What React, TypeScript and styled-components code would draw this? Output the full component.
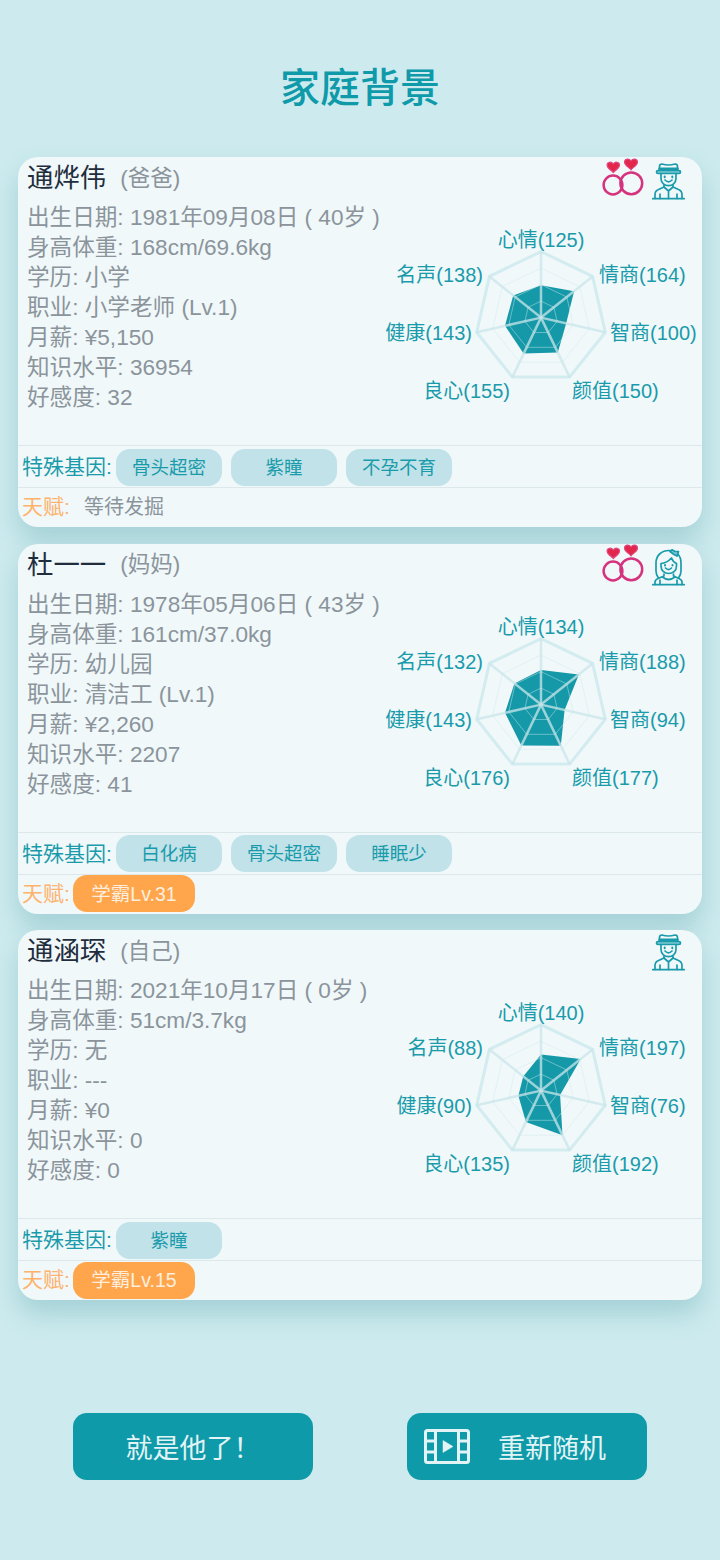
import styled, { createGlobalStyle } from 'styled-components'

const teal = '#0f9aaa'
const font = '"Liberation Sans", "Noto Sans CJK SC", sans-serif'

const GlobalStyle = createGlobalStyle`
  html, body {
    margin: 0;
    background: #cdebee;
    font-family: ${font};
  }
`

const Page = styled.div`
  width: 720px;
  height: 1560px;
  overflow: hidden;
  background: #cdebee;
  display: flex;
  flex-direction: column;
`

const Heading = styled.h1`
  margin: 0;
  height: 157px;
  padding-top: 13px;
  box-sizing: border-box;
  display: flex;
  align-items: center;
  justify-content: center;
  color: ${teal};
  font-size: 40px;
  font-weight: 500;
`

const CardList = styled.div`
  display: flex;
  flex-direction: column;
  gap: 16.5px;
  padding: 0 18px;
`

const Card = styled.section`
  height: 370px;
  background: #f0f8fa;
  border-radius: 20px;
  box-shadow: 0 14px 26px rgba(70, 150, 160, 0.3);
  display: flex;
  flex-direction: column;
  overflow: hidden;
`

const CardHeader = styled.div`
  height: 43px;
  padding: 0 17px 0 9px;
  display: flex;
  align-items: center;
`

const Name = styled.span`
  color: #1f2d3d;
  font-size: 26.4px;
  margin-bottom: 6px;
`

const Relation = styled.span`
  margin-left: 14px;
  color: #8b949b;
  font-size: 22.5px;
  margin-bottom: 6px;
`

const Icons = styled.div`
  margin-left: auto;
  display: flex;
  align-items: flex-end;
  gap: 9px;
  margin-top: 1px;
`

const CardBody = styled.div`
  height: 245px;
  display: flex;
  justify-content: space-between;
`

const InfoList = styled.div`
  padding: 3px 0 0 9px;
  white-space: nowrap;
`

const InfoLine = styled.div`
  height: 30px;
  line-height: 30px;
  color: #8b949b;
  font-size: 22.6px;
`

const ChartSvg = styled.svg`
  flex: none;
  display: block;
`

const ChartLabel = styled.text`
  fill: #1a9bab;
  font-family: ${font};
  font-size: 20px;
`

const Row = styled.div<{ $height: number }>`
  height: ${p => p.$height}px;
  box-sizing: border-box;
  border-top: 1px solid #dde8ea;
  padding-left: 4px;
  display: flex;
  align-items: center;
`

const GeneRow = styled(Row)`
  padding-top: 1px;
`

const RowLabel = styled.span<{ $color: string }>`
  width: 94px;
  flex: none;
  margin-bottom: 4px;
  color: ${p => p.$color};
  font-size: 21px;
  white-space: nowrap;
`

const TalentLabel = styled(RowLabel)`
  width: 51px;
  margin-bottom: 5px;
`

const Chips = styled.div`
  display: flex;
  gap: 9px;
`

const GeneChip = styled.span`
  width: 106px;
  height: 37px;
  padding-bottom: 3px;
  box-sizing: border-box;
  border-radius: 14px;
  background: #c0e2e8;
  color: #1a9bab;
  font-size: 18.5px;
  display: flex;
  align-items: center;
  justify-content: center;
`

const TalentChip = styled.span`
  width: 122px;
  height: 37px;
  margin-bottom: 1px;
  padding-bottom: 3px;
  box-sizing: border-box;
  border-radius: 14px;
  background: #ffa64d;
  color: #fdeede;
  font-size: 19.5px;
  display: flex;
  align-items: center;
  justify-content: center;
`

const PendingTalent = styled.span`
  margin: 0 0 5px 11px;
  color: #8b949b;
  font-size: 20px;
`

const Actions = styled.div`
  margin-top: 113px;
  padding-left: 73px;
  display: flex;
  gap: 94px;
`

const ActionButton = styled.button<{ $withIcon?: boolean }>`
  width: 240px;
  height: 67px;
  padding: ${p => (p.$withIcon ? '0 41px 0 17px' : '0')};
  border: 0;
  border-radius: 14px;
  background: ${teal};
  color: #e2f4f5;
  font-family: ${font};
  font-size: 27px;
  display: flex;
  align-items: center;
  justify-content: ${p => (p.$withIcon ? 'space-between' : 'center')};
`

const axes = ['心情', '情商', '智商', '颜值', '良心', '健康', '名声']
const labelPlaces: { x: number; y: number; anchor: 'start' | 'middle' | 'end' }[] = [
  { x: 159, y: 47, anchor: 'middle' },
  { x: 217, y: 82, anchor: 'start' },
  { x: 228, y: 140, anchor: 'start' },
  { x: 190, y: 198, anchor: 'start' },
  { x: 128, y: 198, anchor: 'end' },
  { x: 90, y: 140, anchor: 'end' },
  { x: 101, y: 82, anchor: 'end' },
]

const polar = (r: number, i: number) => {
  const a = (-90 + (i * 360) / 7) * (Math.PI / 180)
  return `${(159 + r * Math.cos(a)).toFixed(1)},${(117.6 + r * Math.sin(a)).toFixed(1)}`
}
const ringPoints = (r: number) => axes.map((_, i) => polar(r, i)).join(' ')

function Radar ({ values }: { values: number[] }) {
  return (
    <ChartSvg width="320" height="245" viewBox="0 0 320 245">
      <polygon points={values.map((v, i) => polar(v * 0.258, i)).join(' ')} fill="#1599a9" />
      {[16.5, 33, 49.5].map(r => (
        <polygon key={r} points={ringPoints(r)} fill="none" stroke="#cfe9ec" strokeOpacity="0.45" strokeWidth="1" />
      ))}
      <polygon points={ringPoints(66)} fill="none" stroke="#d3ecef" strokeWidth="3" />
      {axes.map((_, i) => {
        const [x, y] = polar(66, i).split(',')
        return <line key={i} x1="159" y1="117.6" x2={x} y2={y} stroke="#c9e6ea" strokeOpacity="0.75" strokeWidth="2.5" />
      })}
      {axes.map((axis, i) => (
        <ChartLabel key={axis} x={labelPlaces[i].x} y={labelPlaces[i].y} textAnchor={labelPlaces[i].anchor}>
          {axis}({values[i]})
        </ChartLabel>
      ))}
    </ChartSvg>
  )
}

const Heart = ({ x, y, s }: { x: number; y: number; s: number }) => (
  <path
    transform={`translate(${x} ${y}) scale(${s})`}
    d="M0 5 C-1.5 3 -5 2 -5 -1 C-5 -3.5 -1.5 -4.2 0 -1.8 C1.5 -4.2 5 -3.5 5 -1 C5 2 1.5 3 0 5 Z"
    fill="#e2274b"
    stroke="#e04a86"
    strokeWidth="0.9"
  />
)

const RingsIcon = () => (
  <svg width="42" height="41" viewBox="0 0 42 41" overflow="visible">
    <circle cx="12" cy="26" r="9.4" fill="none" stroke="#d6337f" strokeWidth="2.5" />
    <circle cx="30.3" cy="24.3" r="10.9" fill="none" stroke="#d6337f" strokeWidth="2.5" />
    <Heart x={12.3} y={7.3} s={1.25} />
    <Heart x={30} y={4.3} s={1.3} />
  </svg>
)

const ManIcon = () => (
  <svg width="33" height="37" viewBox="0 0 33 37" fill="none" stroke="#1a9bab" strokeWidth="1.7" strokeLinecap="round" strokeLinejoin="round">
    <path d="M7.5 7.5 V3.5 Q7.5 1 10 1 Q16.5 3 23 1 Q25.5 1 25.5 3.5 V7.5" />
    <path d="M7.5 5.8 H25.5" strokeWidth="2.6" />
    <rect x="4.5" y="7.5" width="24" height="3" rx="1.5" fill="#7cc8d2" />
    <path d="M9 10.5 V15.5 C9 25 24 25 24 15.5 V10.5" />
    <path d="M13 17 Q16.5 20.5 20 17" />
    <path d="M12.7 13.6 V14.2 M20.3 13.6 V14.2" strokeWidth="2" />
    <path d="M12 22 V24 L6.5 26.5 Q3 28 3 31.5 V35.5" />
    <path d="M21 22 V24 L26.5 26.5 Q30 28 30 31.5 V35.5" />
    <path d="M12 24 L16.5 28 L21 24 M16.5 28 V35.5 M8 31 V35.5 M25 31 V35.5" />
    <path d="M0.7 35.7 H32.3" />
  </svg>
)

const WomanIcon = () => (
  <svg width="33" height="37" viewBox="0 0 33 37" fill="none" stroke="#1a9bab" strokeWidth="1.7" strokeLinecap="round" strokeLinejoin="round">
    <path d="M6.5 29 Q4 26 4 22 V14 C4 6 10 1.5 17 1.5 C24 1.5 29 6 29 14 V22 Q29 26 26.5 29" />
    <path d="M9 14.5 Q15 14 19.5 9 Q21 13 24.5 14.5 V17 C24.5 27 9 27 9 17 Z" />
    <path d="M13.5 19 Q16.5 22 19.5 19" />
    <path d="M13 16 V16.6 M20.5 16 V16.6" strokeWidth="2" />
    <path d="M18 2.5 L22 5.5 L25 7 L26.5 2.5 L23 2.5 L20 0.8 Z" fill="#7cc8d2" />
    <path d="M12 25 V27 L6 29.5 Q3 31 3 33 V35.5 M21.5 25 V27 L27 29.5 Q30 31 30 33 V35.5" />
    <path d="M10.5 28 Q16.5 33 23 28 M8 31 V35.5 M25 31 V35.5" />
    <path d="M0.7 35.7 H32.3" />
  </svg>
)

const FilmIcon = () => (
  <svg width="46" height="35" viewBox="0 0 46 35" fill="none" stroke="#e2f4f5" strokeWidth="3" strokeLinejoin="round">
    <rect x="1.5" y="1.5" width="43" height="32" rx="2" />
    <path d="M11.5 1.5 V33.5 M34.5 1.5 V33.5 M1.5 12 H11.5 M1.5 23 H11.5 M34.5 12 H44.5 M34.5 23 H44.5" />
    <path d="M19 11.5 L29 17.5 L19 23.5 Z" fill="#e2f4f5" strokeWidth="0.5" />
  </svg>
)

type Person = {
  name: string
  relation: string
  married: boolean
  woman?: boolean
  lines: string[]
  values: number[]
  genes: string[]
  talent?: string
}

const people: Person[] = [
  {
    name: '通烨伟',
    relation: '(爸爸)',
    married: true,
    lines: ['出生日期: 1981年09月08日 ( 40岁 )', '身高体重: 168cm/69.6kg', '学历: 小学', '职业: 小学老师 (Lv.1)', '月薪: ¥5,150', '知识水平: 36954', '好感度: 32'],
    values: [125, 164, 100, 150, 155, 143, 138],
    genes: ['骨头超密', '紫瞳', '不孕不育'],
  },
  {
    name: '杜一一',
    relation: '(妈妈)',
    married: true,
    woman: true,
    lines: ['出生日期: 1978年05月06日 ( 43岁 )', '身高体重: 161cm/37.0kg', '学历: 幼儿园', '职业: 清洁工 (Lv.1)', '月薪: ¥2,260', '知识水平: 2207', '好感度: 41'],
    values: [134, 188, 94, 177, 176, 143, 132],
    genes: ['白化病', '骨头超密', '睡眠少'],
    talent: '学霸Lv.31',
  },
  {
    name: '通涵琛',
    relation: '(自己)',
    married: false,
    lines: ['出生日期: 2021年10月17日 ( 0岁 )', '身高体重: 51cm/3.7kg', '学历: 无', '职业: ---', '月薪: ¥0', '知识水平: 0', '好感度: 0'],
    values: [140, 197, 76, 192, 135, 90, 88],
    genes: ['紫瞳'],
    talent: '学霸Lv.15',
  },
]

export default function App () {
  return (
    <Page>
      <GlobalStyle />
      <Heading>家庭背景</Heading>
      <CardList>
        {people.map(person => (
          <Card key={person.name}>
            <CardHeader>
              <Name>{person.name}</Name>
              <Relation>{person.relation}</Relation>
              <Icons>
                {person.married && <RingsIcon />}
                {person.woman ? <WomanIcon /> : <ManIcon />}
              </Icons>
            </CardHeader>
            <CardBody>
              <InfoList>
                {person.lines.map(line => <InfoLine key={line}>{line}</InfoLine>)}
              </InfoList>
              <Radar values={person.values} />
            </CardBody>
            <GeneRow $height={42}>
              <RowLabel $color="#1a9bab">特殊基因:</RowLabel>
              <Chips>
                {person.genes.map(gene => <GeneChip key={gene}>{gene}</GeneChip>)}
              </Chips>
            </GeneRow>
            <Row $height={40}>
              <TalentLabel $color="#ffb26b">天赋:</TalentLabel>
              {person.talent
                ? <TalentChip>{person.talent}</TalentChip>
                : <PendingTalent>等待发掘</PendingTalent>}
            </Row>
          </Card>
        ))}
      </CardList>
      <Actions>
        <ActionButton>就是他了！</ActionButton>
        <ActionButton $withIcon>
          <FilmIcon />
          重新随机
        </ActionButton>
      </Actions>
    </Page>
  )
}
